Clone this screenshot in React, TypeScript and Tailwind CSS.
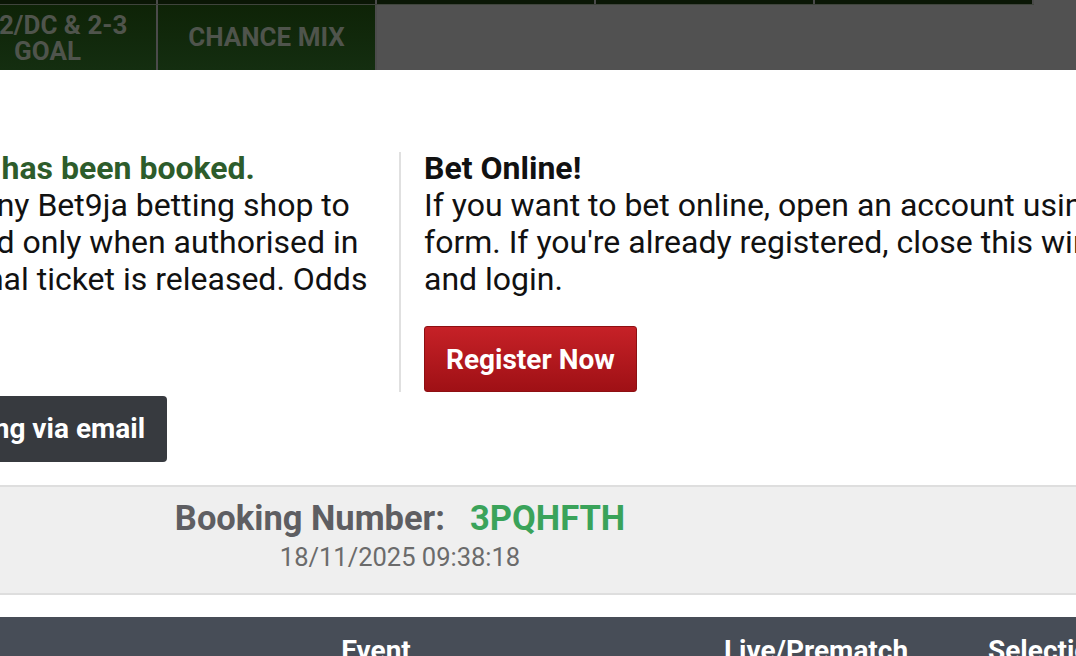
import React from "react";

const tabsTop = [0, 1, 2, 3, 4];

const Tabs = () => (
  <div className="h-[70px] bg-[#515151]">
    <div className="-ml-[61px] flex h-[5px] w-fit border-b border-[#3f443c]">
      {tabsTop.map((t) => (
        <div key={t} className="h-[4px] w-[219px] border-r-2 border-[#4a4a4a] bg-[#0a1605]" />
      ))}
    </div>
    <div className="-ml-[61px] flex h-[65px] w-fit">
      <div className="flex w-[219px] items-center justify-center border-r-2 border-[#4b4b4b] bg-gradient-to-b from-[#0e2307] to-[#142e10] text-center text-[26px] font-bold leading-[26px] text-[#4f544c]">
        1X2/DC &amp; 2-3
        <br />
        GOAL
      </div>
      <div className="flex w-[219px] items-center justify-center border-r-2 border-[#4b4b4b] bg-gradient-to-b from-[#0e2307] to-[#142e10] text-[26px] font-bold text-[#4f544c]">
        CHANCE MIX
      </div>
    </div>
  </div>
);

const BookingModal = () => (
  <div className="bg-white">
    <div className="-ml-[280px] w-[1360px] pt-[80px]">
      <div className="flex items-stretch">
        <div className="w-[679px] shrink-0 whitespace-nowrap pl-[75px] pr-[24px] text-[32px] leading-[37px] text-[#111]">
          <div className="font-bold text-[#2d5c2b]">Your bet code has been booked.</div>
          Please go to any Bet9ja betting shop to
          <br />
          Bets are placed only when authorised in
          <br />
          shop as the final ticket is released. Odds
          <br />
          may change.
        </div>
        <div className="mt-[2px] w-[2px] shrink-0 bg-[#e0e0e0]" />
        <div className="min-w-0 flex-1 whitespace-nowrap pl-[23px] text-[32px] leading-[37px] text-[#111]">
          <div className="font-bold">Bet Online!</div>
          If you want to bet online, open an account using our
          <br />
          form. If you're already registered, close this window
          <br />
          and login.
          <div>
            <button className="mt-[28px] h-[66px] rounded-[3px] border border-[#8e0f12] bg-gradient-to-b from-[#c62127] to-[#9f1015] px-[21px] text-[28px] font-bold text-white">
              Register Now
            </button>
          </div>
        </div>
      </div>
      <div className="mt-[4px] pl-[102px]">
        <button className="h-[66px] rounded-[4px] bg-[#373a3f] px-[22px] text-[28px] font-bold text-white">
          Share booking via email
        </button>
      </div>
      <div className="mt-[23px] border-y-2 border-[#dedede] bg-[#efefef] pb-[22px] pt-[10px] text-center">
        <div className="text-[34.5px] font-bold leading-[42px] text-[#5e5e62]">
          Booking Number:
          <span className="ml-[25px] text-[#3aa35a]">3PQHFTH</span>
        </div>
        <div className="mt-[4px] text-[25.5px] leading-[28px] text-[#6b6b6b]">18/11/2025 09:38:18</div>
      </div>
    </div>
  </div>
);

const TableHeader = () => (
  <div className="mt-[22px] flex h-[60px] bg-[#474d57] pt-[18px] text-[28px] font-bold leading-[32px] text-white">
    <div className="w-[752px] shrink-0 text-center">Event</div>
    <div className="flex w-[128px] shrink-0 justify-center whitespace-nowrap">Live/Prematch</div>
    <div className="ml-[108px] shrink-0 whitespace-nowrap">Selection</div>
  </div>
);

export default function App() {
  return (
    <div className="h-[656px] w-[1076px] overflow-hidden bg-white font-['Roboto',sans-serif]">
      <Tabs />
      <BookingModal />
      <TableHeader />
    </div>
  );
}
